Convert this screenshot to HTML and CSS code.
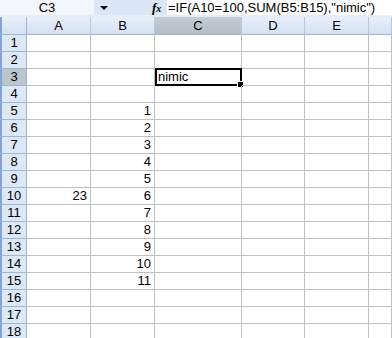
FILE: index.html
```html
<!DOCTYPE html>
<html lang="ro">
<head>
    <meta charset="UTF-8">
    <title>Foaie de calcul</title>
    <link rel="stylesheet" href="styles.css">
</head>
<body>
    <div class="formula-bar">
        <div class="name-box">C3</div>
        <div class="name-drop"><span class="arrow"></span></div>
        <div class="fx"><i>f</i><span>x</span></div>
        <div class="formula">=IF(A10=100,SUM(B5:B15),"nimic")</div>
    </div>
    <div class="gap"></div>

    <div class="sheet" id="sheet"></div>

    <script>
        const cols = ['A', 'B', 'C', 'D', 'E', ''];
        const values = {
            'B5': '1', 'B6': '2', 'B7': '3', 'B8': '4', 'B9': '5', 'B10': '6',
            'B11': '7', 'B12': '8', 'B13': '9', 'B14': '10', 'B15': '11',
            'A10': '23', 'C3': 'nimic'
        };
        const sheet = document.getElementById('sheet');
        let html = '<div class="hd corner"></div>';
        cols.forEach(c => {
            html += `<div class="hd col${c === 'C' ? ' sel' : ''}">${c}</div>`;
        });
        for (let r = 1; r <= 18; r++) {
            html += `<div class="hd row${r === 3 ? ' sel' : ''}">${r}</div>`;
            cols.forEach(c => {
                const key = c + r;
                const v = values[key] || '';
                let cls = 'cell';
                if (/^\d+$/.test(v)) cls += ' num';
                if (key === 'C3') cls += ' active';
                html += `<div class="${cls}">${v}${key === 'C3' ? '<span class="handle"></span>' : ''}</div>`;
            });
        }
        sheet.innerHTML = html;
    </script>
</body>
</html>
```
FILE: styles.css
```css
body {
    margin: 0;
    width: 392px;
    height: 338px;
    overflow: hidden;
    background: #ffffff;
    font-family: 'Liberation Sans', Arial, sans-serif;
    font-size: 13px;
    color: #000000;
}

.formula-bar {
    display: flex;
    height: 15px;
    background: #eef3fa;
}

.name-box {
    width: 94px;
    text-align: center;
    line-height: 15px;
    background: #f3f6fb;
}

.name-drop {
    width: 54px;
    background: #dbe6f6;
    display: flex;
    align-items: center;
    padding-left: 6px;
    box-sizing: border-box;
}

.arrow {
    width: 0;
    height: 0;
    border-left: 4px solid transparent;
    border-right: 4px solid transparent;
    border-top: 4px solid #000000;
}

.fx {
    width: 19px;
    background: #dbe6f6;
    font-family: 'Liberation Serif', serif;
    font-weight: bold;
    font-size: 13px;
    line-height: 15px;
    padding-left: 4px;
    box-sizing: border-box;
}

.fx span {
    font-size: 10px;
    font-style: italic;
}

.formula {
    flex: 1;
    line-height: 15px;
    padding-left: 1px;
    white-space: nowrap;
    background: #ffffff;
}

.gap {
    height: 2px;
    background: #e6edf7;
}

.sheet {
    display: grid;
    grid-template-columns: 27px 64px 64px 87px 63px 64px 23px;
    grid-template-rows: 18px repeat(18, 17px);
}

.hd {
    box-sizing: border-box;
    background: linear-gradient(#e9f0fa, #d3e0f3);
    border-right: 1px solid #9eb6ce;
    border-bottom: 1px solid #9eb6ce;
    text-align: center;
    line-height: 17px;
    color: #000000;
}

.hd.row {
    background: #dde8f7;
    border-left: 2px solid #84a4d8;
    line-height: 16px;
}

.hd.corner {
    border-left: 2px solid #84a4d8;
}

.hd.col {
    border-right-color: #b7c9e2;
}

.hd.sel {
    background: #bcc4ce;
}

.hd.col.sel {
    background: linear-gradient(#c6ccd4, #b4bcc6);
}

.cell {
    position: relative;
    box-sizing: border-box;
    border-right: 1px solid #c0c0c0;
    border-bottom: 1px solid #c0c0c0;
    line-height: 16px;
    padding: 0 3px;
    white-space: nowrap;
}

.cell.num {
    text-align: right;
}

.cell.active {
    border: 2px solid #000000;
    margin: -1px 0 0 0;
    line-height: 14px;
    padding-left: 1px;
}

.handle {
    position: absolute;
    right: -4px;
    bottom: -4px;
    width: 5px;
    height: 5px;
    background: #000000;
    border: 1px solid #ffffff;
}
```
